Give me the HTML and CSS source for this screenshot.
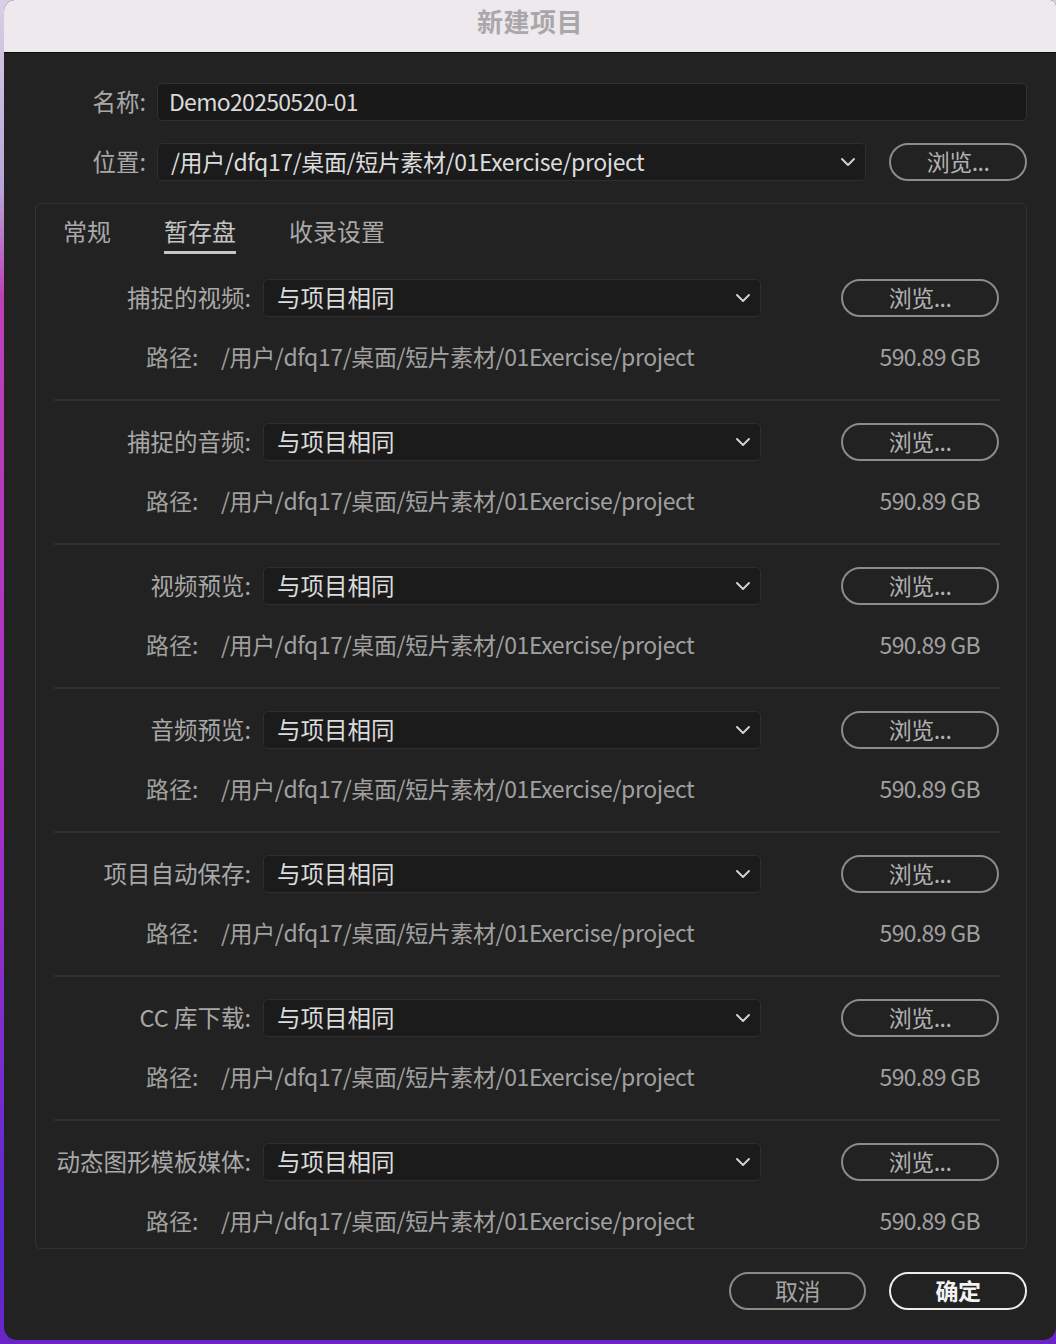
FILE: index.html
```html
<!DOCTYPE html>
<html lang="zh-CN">
<head>
<meta charset="utf-8">
<title>新建项目</title>
<link rel="stylesheet" href="styles.css">
</head>
<body>
<div class="window">
  <div class="titlebar">新建项目</div>
  <div class="content">
    <div class="top-row">
      <span class="top-label">名称:</span>
      <div class="text-input">Demo20250520-01</div>
    </div>
    <div class="top-row">
      <span class="top-label">位置:</span>
      <div class="select loc-select"><span class="select-text loc-text">/用户/dfq17/桌面/短片素材/01Exercise/project</span><svg class="chev" width="16" height="10" viewBox="0 0 16 10"><polyline points="2,2 8,8 14,2" fill="none" stroke="#d0d0d0" stroke-width="2" stroke-linecap="round" stroke-linejoin="round"/></svg></div>
      <button class="pill top-browse">浏览...</button>
    </div>

    <div class="panel">
      <div class="tabs">
        <span class="tab">常规</span>
        <span class="tab active">暂存盘</span>
        <span class="tab">收录设置</span>
      </div>

      <div class="entry">
        <div class="entry-main">
          <span class="entry-label">捕捉的视频:</span>
          <div class="select row-select"><span class="select-text">与项目相同</span><svg class="chev" width="16" height="10" viewBox="0 0 16 10"><polyline points="2,2 8,8 14,2" fill="none" stroke="#d0d0d0" stroke-width="2" stroke-linecap="round" stroke-linejoin="round"/></svg></div>
          <button class="pill row-browse">浏览...</button>
        </div>
        <div class="entry-path"><span class="path-label">路径:</span><span class="path-text">/用户/dfq17/桌面/短片素材/01Exercise/project</span><span class="size">590.89 GB</span></div>
      </div>

      <div class="entry">
        <div class="entry-main">
          <span class="entry-label">捕捉的音频:</span>
          <div class="select row-select"><span class="select-text">与项目相同</span><svg class="chev" width="16" height="10" viewBox="0 0 16 10"><polyline points="2,2 8,8 14,2" fill="none" stroke="#d0d0d0" stroke-width="2" stroke-linecap="round" stroke-linejoin="round"/></svg></div>
          <button class="pill row-browse">浏览...</button>
        </div>
        <div class="entry-path"><span class="path-label">路径:</span><span class="path-text">/用户/dfq17/桌面/短片素材/01Exercise/project</span><span class="size">590.89 GB</span></div>
      </div>

      <div class="entry">
        <div class="entry-main">
          <span class="entry-label">视频预览:</span>
          <div class="select row-select"><span class="select-text">与项目相同</span><svg class="chev" width="16" height="10" viewBox="0 0 16 10"><polyline points="2,2 8,8 14,2" fill="none" stroke="#d0d0d0" stroke-width="2" stroke-linecap="round" stroke-linejoin="round"/></svg></div>
          <button class="pill row-browse">浏览...</button>
        </div>
        <div class="entry-path"><span class="path-label">路径:</span><span class="path-text">/用户/dfq17/桌面/短片素材/01Exercise/project</span><span class="size">590.89 GB</span></div>
      </div>

      <div class="entry">
        <div class="entry-main">
          <span class="entry-label">音频预览:</span>
          <div class="select row-select"><span class="select-text">与项目相同</span><svg class="chev" width="16" height="10" viewBox="0 0 16 10"><polyline points="2,2 8,8 14,2" fill="none" stroke="#d0d0d0" stroke-width="2" stroke-linecap="round" stroke-linejoin="round"/></svg></div>
          <button class="pill row-browse">浏览...</button>
        </div>
        <div class="entry-path"><span class="path-label">路径:</span><span class="path-text">/用户/dfq17/桌面/短片素材/01Exercise/project</span><span class="size">590.89 GB</span></div>
      </div>

      <div class="entry">
        <div class="entry-main">
          <span class="entry-label">项目自动保存:</span>
          <div class="select row-select"><span class="select-text">与项目相同</span><svg class="chev" width="16" height="10" viewBox="0 0 16 10"><polyline points="2,2 8,8 14,2" fill="none" stroke="#d0d0d0" stroke-width="2" stroke-linecap="round" stroke-linejoin="round"/></svg></div>
          <button class="pill row-browse">浏览...</button>
        </div>
        <div class="entry-path"><span class="path-label">路径:</span><span class="path-text">/用户/dfq17/桌面/短片素材/01Exercise/project</span><span class="size">590.89 GB</span></div>
      </div>

      <div class="entry">
        <div class="entry-main">
          <span class="entry-label">CC 库下载:</span>
          <div class="select row-select"><span class="select-text">与项目相同</span><svg class="chev" width="16" height="10" viewBox="0 0 16 10"><polyline points="2,2 8,8 14,2" fill="none" stroke="#d0d0d0" stroke-width="2" stroke-linecap="round" stroke-linejoin="round"/></svg></div>
          <button class="pill row-browse">浏览...</button>
        </div>
        <div class="entry-path"><span class="path-label">路径:</span><span class="path-text">/用户/dfq17/桌面/短片素材/01Exercise/project</span><span class="size">590.89 GB</span></div>
      </div>

      <div class="entry last">
        <div class="entry-main">
          <span class="entry-label">动态图形模板媒体:</span>
          <div class="select row-select"><span class="select-text">与项目相同</span><svg class="chev" width="16" height="10" viewBox="0 0 16 10"><polyline points="2,2 8,8 14,2" fill="none" stroke="#d0d0d0" stroke-width="2" stroke-linecap="round" stroke-linejoin="round"/></svg></div>
          <button class="pill row-browse">浏览...</button>
        </div>
        <div class="entry-path"><span class="path-label">路径:</span><span class="path-text">/用户/dfq17/桌面/短片素材/01Exercise/project</span><span class="size">590.89 GB</span></div>
      </div>
    </div>

    <div class="actions">
      <button class="pill cancel">取消</button>
      <button class="pill ok">确定</button>
    </div>
  </div>
</div>
</body>
</html>
```

FILE: styles.css
```css
* { box-sizing: border-box; }

html, body {
  margin: 0;
  padding: 0;
  width: 1056px;
  height: 1344px;
  overflow: hidden;
}

body {
  background: linear-gradient(180deg, #d9cfe6 0%, #b7a6d6 14%, #c040b8 22%, #a830c8 60%, #5a2ad0 92%, #6a24c8 100%);
  font-family: "Noto Sans CJK SC", "Noto Sans", sans-serif;
}

.window {
  margin-left: 4px;
  width: 1052px;
  height: 1340px;
  background: #222222;
  border-radius: 11px 6px 13px 13px;
  overflow: hidden;
}

.titlebar {
  height: 53px;
  background: #ede9ed;
  border-bottom: 1px solid #0a0a0a;
  display: flex;
  align-items: center;
  justify-content: center;
  font-size: 26px;
  font-weight: 700;
  color: #a9a7a9;
  letter-spacing: 0.5px;
  padding-bottom: 11px;
}

.content {
  padding: 30px 29px 0 31px;
  display: flex;
  flex-direction: column;
  gap: 22px;
}

.top-row {
  display: flex;
  align-items: center;
  height: 38px;
}

.top-label {
  width: 111px;
  text-align: right;
  font-size: 23.5px;
  color: #a8a8a8;
  margin-right: 11px;
  line-height: 30px;
  padding-bottom: 2px;
}

.text-input {
  flex: 1;
  height: 38px;
  background: #191919;
  border: 1px solid #303030;
  border-radius: 5px;
  padding-left: 11px;
  font-size: 23px;
  line-height: 34px;
  color: #dadada;
  letter-spacing: -0.7px;
}

.select {
  height: 38px;
  background: #1b1b1b;
  border: 1px solid #2e2e2e;
  border-radius: 5px;
  display: flex;
  align-items: center;
  justify-content: space-between;
  padding: 0 9px 0 13px;
}

.select-text {
  font-size: 23.5px;
  color: #dcdcdc;
  line-height: 30px;
  padding-bottom: 3px;
}

.loc-text {
  font-size: 23px;
  letter-spacing: -0.4px;
  padding-bottom: 3px;
}

.loc-select {
  width: 709px;
}

.chev {
  display: block;
}

.pill {
  font-family: "Noto Sans CJK SC", "Noto Sans", sans-serif;
  height: 38px;
  border: 2.5px solid #8c8c8c;
  border-radius: 19px;
  background: transparent;
  color: #b2b2b2;
  font-size: 23px;
  line-height: 30px;
  padding: 0 0 2px;
  display: flex;
  align-items: center;
  justify-content: center;
  letter-spacing: -0.5px;
}

.top-browse {
  width: 138px;
  margin-left: 23px;
}

.panel {
  border: 1px solid #333333;
  border-radius: 5px;
  padding: 0 26px 11px 18px;
}

.tabs {
  display: flex;
  gap: 53px;
  padding-left: 9px;
  padding-top: 12px;
  margin-bottom: 25px;
}

.tab {
  font-size: 24px;
  line-height: 30px;
  color: #a9a9a9;
  padding-bottom: 5px;
  border-bottom: 3px solid transparent;
}

.tab.active {
  color: #c4c4c4;
  border-bottom-color: #c6c6c6;
}

.entry {
  border-bottom: 2px solid #2f2f2f;
  margin-bottom: 22px;
}

.entry.last {
  border-bottom: none;
  margin-bottom: 0;
}

.entry-main {
  display: flex;
  align-items: center;
  height: 38px;
}

.entry-label {
  width: 197px;
  text-align: right;
  font-size: 23.5px;
  color: #a8a8a8;
  line-height: 30px;
  white-space: nowrap;
  padding-bottom: 3px;
}

.row-select {
  width: 498px;
  margin-left: 12px;
}

.row-browse {
  width: 158px;
  margin-left: 80px;
}

.entry-path {
  display: flex;
  align-items: center;
  height: 30px;
  margin: 26px 0;
  padding-left: 92px;
  font-size: 23px;
  color: #a0a0a0;
  padding-bottom: 4px;
}

.entry.last .entry-path {
  margin-bottom: 0;
}

.path-label {
  width: 75px;
  white-space: nowrap;
}

.path-text {
  flex: 1;
  white-space: nowrap;
  letter-spacing: -0.4px;
}

.size {
  padding-right: 20px;
  white-space: nowrap;
  letter-spacing: -0.65px;
}

.actions {
  display: flex;
  justify-content: flex-end;
  gap: 23px;
  margin-top: 1px;
}

.cancel {
  width: 137px;
  border-color: #8a8a8a;
  color: #a4a4a4;
}

.ok {
  width: 138px;
  border-color: #ececec;
  color: #f2f2f2;
  font-weight: 700;
}
```
